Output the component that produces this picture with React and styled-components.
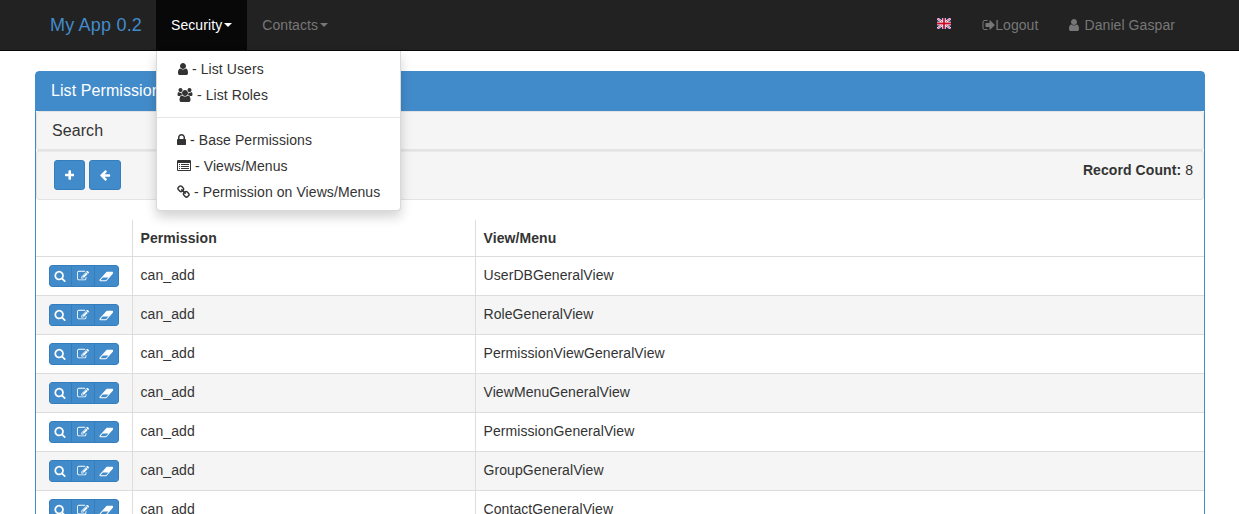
import React from 'react';
import styled, { createGlobalStyle } from 'styled-components';

const GlobalStyle = createGlobalStyle`
  html, body {
    margin: 0;
    height: 514px;
    overflow: hidden;
    background: #fff;
    font-family: "Liberation Sans", Arial, sans-serif;
    font-size: 14px;
    line-height: 20px;
    letter-spacing: 0.08px;
    color: #333;
  }
  * { box-sizing: border-box; }
`;

const Navbar = styled.nav`
  height: 51px;
  background: #222;
  border-bottom: 1px solid #080808;
`;

const Container = styled.div`
  width: 1170px;
  margin-left: 35px;
`;

const NavInner = styled(Container)`
  display: flex;
  height: 50px;
  padding: 0 15px;
`;

const Brand = styled.a`
  flex: none;
  width: 106px;
  padding: 15px 0;
  font-size: 18px;
  letter-spacing: 0.2px;
  color: #428bca;
`;

const NavItem = styled.div`
  position: relative;
  display: flex;
  align-items: center;
  height: 50px;
  padding: 0 15px;
  color: ${p => (p.$active ? '#fff' : '#777')};
  background: ${p => (p.$active ? '#080808' : 'transparent')};
`;

const Caret = styled.span`
  display: inline-block;
  margin-left: 2px;
  border-top: 4px solid currentColor;
  border-left: 4px solid transparent;
  border-right: 4px solid transparent;
`;

const Spacer = styled.div`
  flex: 1;
`;

const FlagLink = styled(NavItem)`
  margin-right: 1px;
  padding-bottom: 3px;
`;

const UserName = styled(NavItem)`
  gap: 5px;
`;

const Dropdown = styled.ul`
  position: absolute;
  top: 51px;
  left: 0;
  z-index: 10;
  width: 245px;
  margin: 0;
  padding: 5px 0;
  list-style: none;
  background: #fff;
  color: #333;
  border: 1px solid rgba(0, 0, 0, 0.15);
  border-top: 0;
  border-radius: 0 0 4px 4px;
  box-shadow: 0 6px 12px rgba(0, 0, 0, 0.175);
`;

const DropdownItem = styled.li`
  display: flex;
  align-items: center;
  gap: 4px;
  height: 26px;
  padding: 0 20px;
  white-space: nowrap;
`;

const Divider = styled.li`
  height: 1px;
  margin: 9px 0;
  background: #e5e5e5;
`;

const Main = styled(Container)`
  padding-top: 20px;
`;

const Panel = styled.section`
  border: 1px solid #428bca;
  border-radius: 4px;
  background: #fff;
`;

const PanelHeading = styled.div`
  height: 39px;
  padding: 9px 15px;
  font-size: 16px;
  color: #fff;
  background: #428bca;
`;

const SearchBar = styled.div`
  height: 39px;
  padding: 9px 15px;
  font-size: 16px;
  background: #f5f5f5;
  border: 1px solid #e3e3e3;
  border-radius: 3px;
  box-shadow: 0 1px 1px rgba(0, 0, 0, 0.05);
`;

const Well = styled.div`
  display: flex;
  justify-content: space-between;
  height: 50px;
  margin-bottom: 20px;
  padding: 9px 10px 9px 17px;
  background: #f5f5f5;
  border: 1px solid #e3e3e3;
  border-radius: 3px;
  box-shadow: inset 0 1px 1px rgba(0, 0, 0, 0.05);
`;

const Toolbar = styled.div`
  display: flex;
  gap: 4px;
`;

const SquareButton = styled.a`
  display: flex;
  align-items: center;
  justify-content: center;
  width: ${p => p.$width}px;
  height: 30px;
  color: #fff;
  background: #428bca;
  border: 1px solid #357ebd;
  border-radius: 3px;
`;

const RecordCount = styled.div`
  strong { font-weight: bold; }
`;

const Table = styled.table`
  width: 100%;
  table-layout: fixed;
  border-collapse: collapse;
`;

const Th = styled.th`
  height: 36px;
  padding: 8px;
  text-align: left;
  font-weight: bold;
  border-bottom: 1px solid #ddd;
  border-left: 1px solid #ddd;
  &:first-child { border-left: 0; }
`;

const Row = styled.tr`
  background: ${p => (p.$striped ? '#f5f5f5' : '#fff')};
`;

const Td = styled.td`
  height: 39px;
  padding: 8px;
  vertical-align: top;
  border-top: 1px solid #ddd;
  border-left: 1px solid #ddd;
  &:first-child { border-left: 0; text-align: center; }
`;

const ButtonGroup = styled.div`
  display: inline-flex;
  vertical-align: top;
  height: 22px;
  border-radius: 3px;
  overflow: hidden;
`;

const GroupButton = styled.a`
  display: flex;
  align-items: center;
  justify-content: center;
  width: ${p => p.$width}px;
  color: #fff;
  background: #428bca;
  border: 1px solid #357ebd;
  &:not(:first-child) { margin-left: -1px; }
  &:first-child { border-radius: 3px 0 0 3px; }
  &:last-child { border-radius: 0 3px 3px 0; }
`;

const Svg = styled.svg`
  display: block;
  flex: none;
  fill: currentColor;
`;

const glyphs = {
  user: ['0 0 1408 1792', 'M1408 1399q0 109-62.5 187t-150.5 78h-854q-88 0-150.5-78t-62.5-187q0-85 8.5-160.5t31.5-152 58.5-131 94-89 134.5-34.5q131 128 313 128t313-128q76 0 134.5 34.5t94 89 58.5 131 31.5 152 8.5 160.5zm-256-887q0 159-112.5 271.5t-271.5 112.5-271.5-112.5-112.5-271.5 112.5-271.5 271.5-112.5 271.5 112.5 112.5 271.5z'],
  users: ['0 0 2048 1792', 'M657 896q-162 5-265 128h-134q-82 0-138-40.5t-56-118.5q0-353 124-353 6 0 43.5 21t97.5 42.5 119 21.5q67 0 133-23-5 37-5 66 0 139 81 256zm1071 637q0 120-73 189.5t-194 69.5h-874q-121 0-194-69.5t-73-189.5q0-53 3.5-103.5t14-109 26.5-108.5 43-97.5 62-81 85.5-53.5 111.5-20q10 0 43 21.5t73 48 107 48 135 21.5 135-21.5 107-48 73-48 43-21.5q61 0 111.5 20t85.5 53.5 62 81 43 97.5 26.5 108.5 14 109 3.5 103.5zm-1024-1277q0 106-75 181t-181 75-181-75-75-181 75-181 181-75 181 75 75 181zm704 384q0 159-112.5 271.5t-271.5 112.5-271.5-112.5-112.5-271.5 112.5-271.5 271.5-112.5 271.5 112.5 112.5 271.5zm576 225q0 78-56 118.5t-138 40.5h-134q-103-123-265-128 81-117 81-256 0-29-5-66 66 23 133 23 59 0 119-21.5t97.5-42.5 43.5-21q124 0 124 353zm-128-609q0 106-75 181t-181 75-181-75-75-181 75-181 181-75 181 75 75 181z'],
  lock: ['320 0 1152 1792', 'M640 768h512v-192q0-106-75-181t-181-75-181 75-75 181v192zm832 96v576q0 40-28 68t-68 28h-960q-40 0-68-28t-28-68v-576q0-40 28-68t68-28h32v-192q0-184 132-316t316-132 316 132 132 316v192h32q40 0 68 28t28 68z'],
  listAlt: ['0 0 1792 1792', 'M384 1184v64q0 13-9.5 22.5t-22.5 9.5h-64q-13 0-22.5-9.5t-9.5-22.5v-64q0-13 9.5-22.5t22.5-9.5h64q13 0 22.5 9.5t9.5 22.5zm0-256v64q0 13-9.5 22.5t-22.5 9.5h-64q-13 0-22.5-9.5t-9.5-22.5v-64q0-13 9.5-22.5t22.5-9.5h64q13 0 22.5 9.5t9.5 22.5zm0-256v64q0 13-9.5 22.5t-22.5 9.5h-64q-13 0-22.5-9.5t-9.5-22.5v-64q0-13 9.5-22.5t22.5-9.5h64q13 0 22.5 9.5t9.5 22.5zm1152 512v64q0 13-9.5 22.5t-22.5 9.5h-960q-13 0-22.5-9.5t-9.5-22.5v-64q0-13 9.5-22.5t22.5-9.5h960q13 0 22.5 9.5t9.5 22.5zm0-256v64q0 13-9.5 22.5t-22.5 9.5h-960q-13 0-22.5-9.5t-9.5-22.5v-64q0-13 9.5-22.5t22.5-9.5h960q13 0 22.5 9.5t9.5 22.5zm0-256v64q0 13-9.5 22.5t-22.5 9.5h-960q-13 0-22.5-9.5t-9.5-22.5v-64q0-13 9.5-22.5t22.5-9.5h960q13 0 22.5 9.5t9.5 22.5zm128 704v-832q0-13-9.5-22.5t-22.5-9.5h-1472q-13 0-22.5 9.5t-9.5 22.5v832q0 13 9.5 22.5t22.5 9.5h1472q13 0 22.5-9.5t9.5-22.5zm128-1088v1088q0 66-47 113t-113 47h-1472q-66 0-113-47t-47-113v-1088q0-66 47-113t113-47h1472q66 0 113 47t47 113z'],
  link: ['64 0 1664 1792', 'M1520 1216q0-40-28-68l-208-208q-28-28-68-28-42 0-72 32 3 3 19 18.5t21.5 21.5 15 19 13 25.5 3.5 27.5q0 40-28 68t-68 28q-15 0-27.5-3.5t-25.5-13-19-15-21.5-21.5-18.5-19q-33 31-33 73 0 40 28 68l206 207q27 27 68 27 40 0 68-26l147-146q28-28 28-67zm-703-705q0-40-28-68l-206-207q-28-28-68-28-39 0-68 27l-147 146q-28 28-28 67 0 40 28 68l208 208q27 27 68 27 42 0 72-31-3-3-19-18.5t-21.5-21.5-15-19-13-25.5-3.5-27.5q0-40 28-68t68-28q15 0 27.5 3.5t25.5 13 19 15 21.5 21.5 18.5 19q33-31 33-73zm895 705q0 120-85 203l-147 146q-83 83-203 83-121 0-204-85l-206-207q-83-83-83-203 0-123 88-209l-88-88q-86 88-208 88-120 0-204-84l-208-208q-84-84-84-204t85-203l147-146q83-83 203-83 121 0 204 85l206 207q83 83 83 203 0 123-88 209l88 88q86-88 208-88 120 0 204 84l208 208q84 84 84 204z'],
  signOut: ['0 0 1664 1792', 'M704 1440q0 4 1 20t.5 26.5-3 23.5-10 19.5-20.5 6.5h-320q-119 0-203.5-84.5t-84.5-203.5v-704q0-119 84.5-203.5t203.5-84.5h320q13 0 22.5 9.5t9.5 22.5q0 4 1 20t.5 26.5-3 23.5-10 19.5-20.5 6.5h-320q-66 0-113 47t-47 113v704q0 66 47 113t113 47h312l11.5 1 11.5 3 8 5.5 7 9 2 13.5zm928-544q0 26-19 45l-544 544q-19 19-45 19t-45-19-19-45v-288h-448q-26 0-45-19t-19-45v-384q0-26 19-45t45-19h448v-288q0-26 19-45t45-19 45 19l544 544q19 19 19 45z'],
  plus: ['0 0 1408 1792', 'M1408 800v192q0 40-28 68t-68 28h-416v416q0 40-28 68t-68 28h-192q-40 0-68-28t-28-68v-416h-416q-40 0-68-28t-28-68v-192q0-40 28-68t68-28h416v-416q0-40 28-68t68-28h192q40 0 68 28t28 68v416h416q40 0 68 28t28 68z'],
  arrowLeft: ['0 0 1792 1792', 'M1664 896v128q0 53-32.5 90.5t-84.5 37.5h-704l293 294q38 36 38 90t-38 90l-75 76q-37 37-90 37-52 0-91-37l-651-652q-37-37-37-90 0-52 37-91l651-650q38-38 91-38 52 0 90 38l75 74q38 38 38 91t-38 91l-293 293h704q52 0 84.5 37.5t32.5 90.5z'],
  search: ['0 0 1792 1792', 'M1216 832q0-185-131.5-316.5t-316.5-131.5-316.5 131.5-131.5 316.5 131.5 316.5 316.5 131.5 316.5-131.5 131.5-316.5zm512 832q0 52-38 90t-90 38q-54 0-90-38l-343-342q-179 124-399 124-143 0-273.5-55.5t-225-150-150-225-55.5-273.5 55.5-273.5 150-225 225-150 273.5-55.5 273.5 55.5 225 150 150 225 55.5 273.5q0 220-124 399l343 343q37 37 37 90z'],
  edit: ['0 0 1792 1792', 'M888 1184l116-116-152-152-116 116v56h96v96h56zm440-720q-16-16-33 1l-350 350q-17 17-1 33t33-1l350-350q17-17 1-33zm80 594v190q0 119-84.5 203.5t-203.5 84.5h-832q-119 0-203.5-84.5t-84.5-203.5v-832q0-119 84.5-203.5t203.5-84.5h832q63 0 117 25 15 7 18 23 3 17-9 29l-49 49q-14 14-32 8-23-6-45-6h-832q-66 0-113 47t-47 113v832q0 66 47 113t113 47h832q66 0 113-47t47-113v-126q0-13 9-22l64-64q15-15 35-7t20 29zm-96-738l288 288-672 672h-288v-288zm444 132l-92 92-288-288 92-92q28-28 68-28t68 28l152 152q28 28 28 68t-28 68z'],
  eraser: ['0 0 1984 1792', 'M960 1408l336-384h-768l-336 384h768zm1013-1077q15 34 9.5 71.5t-30.5 65.5l-896 1024q-38 44-96 44h-768q-38 0-69.5-20.5t-47.5-54.5q-15-34-9.5-71.5t30.5-65.5l896-1024q38-44 96-44h768q38 0 70 20.5t47 54.5z'],
};

const Icon = ({ name, size = 14 }) => {
  const [viewBox, d] = glyphs[name];
  const [, , w, h] = viewBox.split(' ').map(Number);
  return (
    <Svg width={(w / h) * size} height={size} viewBox={viewBox}>
      <path d={d} />
    </Svg>
  );
};

const UkFlag = () => (
  <svg width="14" height="11" viewBox="0 0 14 11">
    <rect width="14" height="11" fill="#1b2a6b" />
    <path d="M0 0L14 11M14 0L0 11" stroke="#fff" strokeWidth="2.2" />
    <path d="M0 0L14 11M14 0L0 11" stroke="#c8102e" strokeWidth="0.8" />
    <path d="M7 0V11M0 5.5H14" stroke="#fff" strokeWidth="3.4" />
    <path d="M7 0V11M0 5.5H14" stroke="#c8102e" strokeWidth="1.8" />
  </svg>
);

const rows = [
  'UserDBGeneralView',
  'RoleGeneralView',
  'PermissionViewGeneralView',
  'ViewMenuGeneralView',
  'PermissionGeneralView',
  'GroupGeneralView',
  'ContactGeneralView',
  'ContactChartView',
];

export default function App() {
  return (
    <>
      <GlobalStyle />
      <Navbar>
        <NavInner>
          <Brand>My App 0.2</Brand>
          <NavItem $active>
            Security<Caret />
            <Dropdown>
              <DropdownItem><Icon name="user" />- List Users</DropdownItem>
              <DropdownItem><Icon name="users" />- List Roles</DropdownItem>
              <Divider />
              <DropdownItem><Icon name="lock" />- Base Permissions</DropdownItem>
              <DropdownItem><Icon name="listAlt" />- Views/Menus</DropdownItem>
              <DropdownItem><Icon name="link" />- Permission on Views/Menus</DropdownItem>
            </Dropdown>
          </NavItem>
          <NavItem>Contacts<Caret /></NavItem>
          <Spacer />
          <FlagLink><UkFlag /></FlagLink>
          <NavItem><Icon name="signOut" />Logout</NavItem>
          <UserName><Icon name="user" />Daniel Gaspar</UserName>
        </NavInner>
      </Navbar>
      <Main>
        <Panel>
          <PanelHeading>List Permissions</PanelHeading>
          <SearchBar>Search</SearchBar>
          <Well>
            <Toolbar>
              <SquareButton $width={31}><Icon name="plus" size={12} /></SquareButton>
              <SquareButton $width={32}><Icon name="arrowLeft" size={12} /></SquareButton>
            </Toolbar>
            <RecordCount><strong>Record Count:</strong> 8</RecordCount>
          </Well>
          <Table>
            <colgroup>
              <col width="96" />
              <col width="343" />
              <col />
            </colgroup>
            <thead>
              <tr>
                <Th />
                <Th>Permission</Th>
                <Th>View/Menu</Th>
              </tr>
            </thead>
            <tbody>
              {rows.map((view, i) => (
                <Row key={view} $striped={i % 2 === 1}>
                  <Td>
                    <ButtonGroup>
                      <GroupButton $width={23}><Icon name="search" size={12} /></GroupButton>
                      <GroupButton $width={24}><Icon name="edit" size={12} /></GroupButton>
                      <GroupButton $width={25}><Icon name="eraser" size={13} /></GroupButton>
                    </ButtonGroup>
                  </Td>
                  <Td>can_add</Td>
                  <Td>{view}</Td>
                </Row>
              ))}
            </tbody>
          </Table>
        </Panel>
      </Main>
    </>
  );
}
